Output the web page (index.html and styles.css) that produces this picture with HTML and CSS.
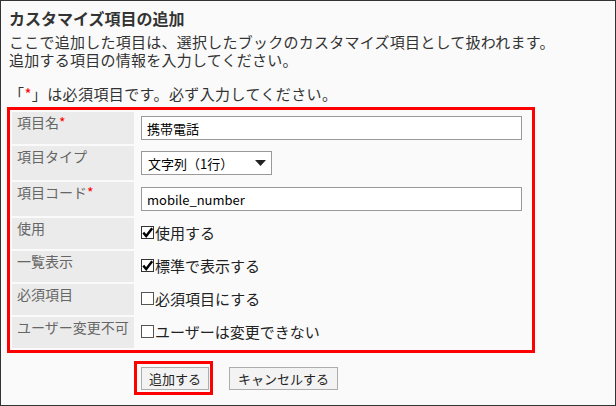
FILE: index.html
```html
<!DOCTYPE html>
<html lang="ja">
<head>
  <meta charset="UTF-8">
  <meta name="viewport" content="width=device-width, initial-scale=1.0">
  <title>カスタマイズ項目の追加</title>
  <link rel="stylesheet" href="styles.css">
</head>
<body>
  <div class="page">
    <h1 class="title">カスタマイズ項目の追加</h1>
    <p class="intro">ここで追加した項目は、選択したブックのカスタマイズ項目として扱われます。<br>追加する項目の情報を入力してください。</p>
    <p class="note">「<span class="req">*</span>」は必須項目です。必ず入力してください。</p>

    <div class="mark form-mark">
      <table class="fields">
        <tr class="row-first">
          <th>項目名<span class="req">*</span></th>
          <td><input class="text" type="text" value="携帯電話"></td>
        </tr>
        <tr class="row-tall">
          <th>項目タイプ</th>
          <td>
            <div class="select">
              <span>文字列（1行）</span>
              <svg width="11" height="6" viewBox="0 0 11 6"><path d="M0 0 H11 L5.5 6 Z" fill="#222"/></svg>
            </div>
          </td>
        </tr>
        <tr class="row-tall">
          <th>項目コード<span class="req">*</span></th>
          <td><input class="text" type="text" value="mobile_number"></td>
        </tr>
        <tr class="row-check">
          <th>使用</th>
          <td>
            <label class="check">
              <svg width="13" height="13" viewBox="0 0 13 13"><rect x="0.5" y="0.5" width="12" height="12" fill="#fff" stroke="#333"/><path d="M2.3 6.6 L5.2 10 L11.2 2.2" fill="none" stroke="#000" stroke-width="2.4"/></svg>使用する
            </label>
          </td>
        </tr>
        <tr class="row-check">
          <th>一覧表示</th>
          <td>
            <label class="check">
              <svg width="13" height="13" viewBox="0 0 13 13"><rect x="0.5" y="0.5" width="12" height="12" fill="#fff" stroke="#333"/><path d="M2.3 6.6 L5.2 10 L11.2 2.2" fill="none" stroke="#000" stroke-width="2.4"/></svg>標準で表示する
            </label>
          </td>
        </tr>
        <tr class="row-check">
          <th>必須項目</th>
          <td>
            <label class="check">
              <svg width="13" height="13" viewBox="0 0 13 13"><rect x="0.5" y="0.5" width="12" height="12" fill="#fff" stroke="#555"/></svg>必須項目にする
            </label>
          </td>
        </tr>
        <tr class="row-check">
          <th>ユーザー変更不可</th>
          <td>
            <label class="check">
              <svg width="13" height="13" viewBox="0 0 13 13"><rect x="0.5" y="0.5" width="12" height="12" fill="#fff" stroke="#555"/></svg>ユーザーは変更できない
            </label>
          </td>
        </tr>
      </table>
    </div>

    <div class="actions">
      <span class="mark btn-mark"><button class="btn" type="button">追加する</button></span>
      <button class="btn btn-cancel" type="button">キャンセルする</button>
    </div>
  </div>
</body>
</html>
```

FILE: styles.css
```css
body { margin: 0; font-family: "Noto Sans CJK JP", "Noto Sans", sans-serif; color: #333; }
.page { width: 616px; height: 406px; box-sizing: border-box; border: 1px solid #333; background: #fafafa; padding: 6px 6px 0; }

.title { margin: 0; padding-left: 2px; font-size: 16px; line-height: 22px; font-weight: bold; color: #333; }
.intro { margin: 4px 0 0; padding-left: 2px; font-size: 15px; line-height: 18px; letter-spacing: 0.25px; color: #333; }
.note { margin: 16px 0 0; padding-left: 2px; font-size: 15px; line-height: 18px; letter-spacing: 0.4px; color: #333; }
.req { color: #f00; }

.mark { border: 3px solid #f00; }
.form-mark { width: 528px; box-sizing: border-box; margin-top: 4px; }

.fields { width: 522px; table-layout: fixed; border-collapse: separate; border-spacing: 2px; }
.fields th { width: 122px; box-sizing: border-box; background: #ebebeb; color: #666; font-size: 14px; line-height: 17px; font-weight: normal; text-align: left; vertical-align: top; padding: 2px 5px 0; white-space: nowrap; }
.fields td { vertical-align: middle; padding: 0 0 0 5px; }
.row-first { height: 32px; }
.row-tall { height: 34px; }
.row-check { height: 31px; }

.text { display: block; width: 381px; height: 24px; box-sizing: border-box; margin: 0; border: 1px solid #999; background: #fff; padding: 0 5px; font-family: inherit; font-size: 13px; color: #000; }
.select { display: flex; align-items: center; justify-content: space-between; width: 131px; height: 24px; box-sizing: border-box; border: 1px solid #999; background: #fff; padding: 0 5px 0 6px; font-size: 13px; color: #000; }

.check { display: flex; align-items: center; font-size: 15px; line-height: 18px; color: #222; margin-top: -2px; }
.check svg { display: block; flex: none; margin-right: 1px; }

.actions { display: flex; align-items: center; margin: 8px 0 0 127px; }
.btn-mark { display: inline-block; padding: 3px 1px 2px 4px; }
.btn { display: block; height: 23px; box-sizing: border-box; margin: 0; padding: 0 7px; border: 1px solid #adadad; background: #f3f3f3; font-family: inherit; font-size: 13px; line-height: 21px; color: #222; }
.btn-cancel { margin-left: 16px; padding: 0 8px; }
```
